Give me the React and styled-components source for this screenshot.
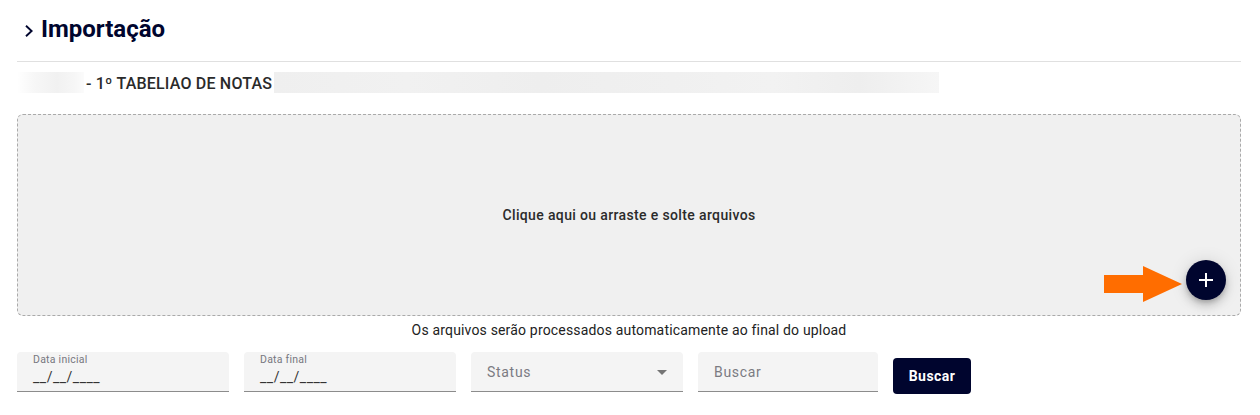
import React from "react";
import styled, { createGlobalStyle } from "styled-components";

const Global = createGlobalStyle`
  html, body { margin: 0; padding: 0; background: #fff; }
  body { font-family: Roboto, "Liberation Sans", sans-serif; }
`;

const Page = styled.div`
  width: 1260px;
  height: 415px;
  box-sizing: border-box;
  padding: 0 19px 0 17px;
  overflow: hidden;
  display: flex;
  flex-direction: column;
`;

const Header = styled.header`
  height: 62px;
  box-sizing: border-box;
  flex: none;
  border-bottom: 1px solid #e0e0e0;
  display: flex;
  align-items: center;
  gap: 7px;
  padding: 0 0 3px 7px;
`;

const Title = styled.h1`
  margin: 0;
  font-size: 24px;
  line-height: 28px;
  font-weight: 700;
  color: #00052e;
`;

const Chevron = styled.svg`
  flex: none;
  margin-top: 4px;
`;

const SubtitleRow = styled.div`
  margin-top: 10px;
  height: 21px;
  flex: none;
  display: flex;
  align-items: center;
`;

const Redacted = styled.div`
  width: ${(p) => p.$w}px;
  height: 21px;
  background: ${(p) => p.$bg};
`;

const Subtitle = styled.div`
  font-size: 16px;
  line-height: 23px;
  padding-top: 1px;
  font-weight: 500;
  letter-spacing: 0.2px;
  color: #2a2a2a;
  padding-left: 2px;
  white-space: nowrap;
  width: 190px;
  box-sizing: border-box;
`;

const Drop = styled.div`
  position: relative;
  margin-top: 21px;
  height: 202px;
  flex: none;
  box-sizing: border-box;
  background: #f0f0f0;
  border: 1px dashed #aaaaaa;
  border-radius: 6px;
  display: flex;
  align-items: center;
  justify-content: center;
`;

const DropText = styled.span`
  font-size: 14px;
  font-weight: 500;
  letter-spacing: 0.36px;
  color: #2b2b2b;
`;

const Fab = styled.button`
  position: absolute;
  right: 14px;
  bottom: 15px;
  width: 40px;
  height: 40px;
  padding: 0;
  border: 0;
  border-radius: 50%;
  background: #00052e;
  box-shadow: 0 3px 5px -1px rgba(0, 0, 0, 0.2), 0 6px 10px 0 rgba(0, 0, 0, 0.14),
    0 1px 18px 0 rgba(0, 0, 0, 0.12);
  display: flex;
  align-items: center;
  justify-content: center;
`;

const ArrowMark = styled.svg`
  position: absolute;
  left: 1086px;
  top: 151px;
`;

const Caption = styled.div`
  margin-top: 6px;
  height: 17px;
  line-height: 17px;
  text-align: center;
  font-size: 14px;
  letter-spacing: 0.17px;
  color: #222;
`;

const Filters = styled.div`
  margin-top: 13px;
  display: flex;
  align-items: flex-start;
  gap: 15px;
`;

const Field = styled.div`
  position: relative;
  width: ${(p) => p.$w}px;
  height: 40px;
  box-sizing: border-box;
  background: #f4f4f4;
  border-bottom: 1px solid #8c8c8c;
  border-radius: 4px 4px 0 0;
  padding: ${(p) => (p.$dense ? "1px 16px 0" : "0 16px")};
  display: flex;
  flex-direction: column;
  justify-content: ${(p) => (p.$dense ? "flex-start" : "center")};
`;

const FieldLabel = styled.span`
  font-size: 10.5px;
  line-height: 14px;
  letter-spacing: 0.25px;
  color: #77777f;
`;

const FieldValue = styled.span`
  font-size: 14px;
  line-height: 19px;
  margin-top: 1px;
  color: #333;
  letter-spacing: 0.5px;
`;

const Placeholder = styled.span`
  font-size: 14px;
  letter-spacing: 0.7px;
  color: #7b7b82;
`;

const Caret = styled.span`
  position: absolute;
  right: 16px;
  top: 18px;
  width: 0;
  height: 0;
  border-left: 5px solid transparent;
  border-right: 5px solid transparent;
  border-top: 5px solid #757575;
`;

const SearchButton = styled.button`
  margin-top: 6px;
  width: 78px;
  height: 36px;
  border: 0;
  border-radius: 4px;
  background: #00052e;
  color: #fff;
  font-family: inherit;
  font-size: 14px;
  font-weight: 700;
  letter-spacing: 0.45px;
  padding: 0;
`;

const blurA =
  "linear-gradient(90deg,#fff 0%,#f7f7f7 25%,#f1f1f1 60%,#f6f6f6 85%,#fbfbfb 100%)";
const blurB =
  "linear-gradient(90deg,#efefef 0%,#f1f1f1 20%,#eeeeee 40%,#f0f0f0 60%,#f2f2f2 75%,#eeeeee 88%,#f6f6f6 100%)";

export default function App() {
  return (
    <Page>
      <Global />
      <Header>
        <Chevron width="10" height="12" viewBox="0 0 10 12" fill="none">
          <path d="M2 .8 L7.6 6 L2 11.2" stroke="#00052e" strokeWidth="1.9" />
        </Chevron>
        <Title>Importação</Title>
      </Header>
      <SubtitleRow>
        <Redacted $w={67} $bg={blurA} />
        <Subtitle>- 1º TABELIAO DE NOTAS</Subtitle>
        <Redacted $w={665} $bg={blurB} />
      </SubtitleRow>
      <Drop>
        <DropText>Clique aqui ou arraste e solte arquivos</DropText>
        <ArrowMark width="78" height="36" viewBox="0 0 78 36">
          <path d="M0 9 H39 V0 L78 18 L39 36 V27 H0 Z" fill="#ff6d00" />
        </ArrowMark>
        <Fab aria-label="Adicionar">
          <svg width="14" height="14" viewBox="0 0 14 14">
            <path d="M7 0 V14 M0 7 H14" stroke="#fff" strokeWidth="2" />
          </svg>
        </Fab>
      </Drop>
      <Caption>Os arquivos serão processados automaticamente ao final do upload</Caption>
      <Filters>
        <Field $w={212} $dense>
          <FieldLabel>Data inicial</FieldLabel>
          <FieldValue>__/__/____</FieldValue>
        </Field>
        <Field $w={212} $dense>
          <FieldLabel>Data final</FieldLabel>
          <FieldValue>__/__/____</FieldValue>
        </Field>
        <Field $w={212}>
          <Placeholder>Status</Placeholder>
          <Caret />
        </Field>
        <Field $w={180}>
          <Placeholder>Buscar</Placeholder>
        </Field>
        <SearchButton>Buscar</SearchButton>
      </Filters>
    </Page>
  );
}
